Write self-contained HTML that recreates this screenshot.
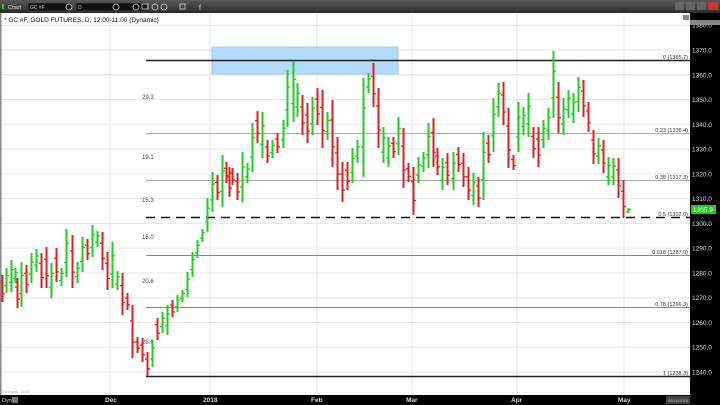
<!DOCTYPE html>
<html><head><meta charset="utf-8"><style>
html,body{margin:0;padding:0;width:720px;height:405px;overflow:hidden;background:#fff;font-family:"Liberation Sans",sans-serif}
svg{display:block}
</style></head><body>
<svg id="s" width="720" height="405" xmlns="http://www.w3.org/2000/svg" font-family="Liberation Sans, sans-serif">
<defs><linearGradient id="tb" x1="0" y1="0" x2="0" y2="1"><stop offset="0" stop-color="#5a5a5a"/><stop offset="1" stop-color="#2a2a2a"/></linearGradient></defs>
<rect x="0" y="0" width="720" height="405" fill="#fff"/>
<g id="grid" stroke="#e6e6e6" stroke-width="1"></g>
<rect x="212" y="47" width="186" height="27" fill="#b3dcfa" stroke="#9ccbee"/>
<g stroke-width="1">
<line x1="146" y1="60.5" x2="690" y2="60.5" stroke="#222" stroke-width="1.5"/>
<line x1="146" y1="133.5" x2="690" y2="133.5" stroke="#aaa"/>
<line x1="146" y1="180.5" x2="690" y2="180.5" stroke="#aaa"/>
<line x1="146" y1="217.5" x2="690" y2="217.5" stroke="#111" stroke-width="1.5" stroke-dasharray="9,6"/>
<line x1="146" y1="255.5" x2="690" y2="255.5" stroke="#888"/>
<line x1="146" y1="307.5" x2="690" y2="307.5" stroke="#888"/>
<line x1="146" y1="376.5" x2="690" y2="376.5" stroke="#222" stroke-width="1.5"/>
</g>
<g font-size="5.5" fill="#333" text-anchor="end">
<text x="688" y="59">0 (1365.7)</text>
<text x="688" y="132">0.23 (1336.4)</text>
<text x="688" y="179">0.38 (1317.3)</text>
<text x="688" y="216">0.5 (1302.0)</text>
<text x="688" y="254">0.618 (1287.0)</text>
<text x="688" y="306">0.78 (1266.3)</text>
<text x="688" y="375">1 (1238.3)</text>
</g>
<g font-size="6" fill="#444">
<text x="142" y="99">29.3</text><text x="142" y="159">19.1</text><text x="142" y="202">15.3</text>
<text x="142" y="239">15.0</text><text x="142" y="283">20.6</text><text x="142" y="344">28.0</text>
</g>
<g id="bars" stroke-width="2"></g>
<rect x="0" y="0" width="720" height="13" fill="url(#tb)"/>
<rect x="2" y="4" width="2" height="5" fill="#3c3"/>
<text x="8" y="9" font-size="5.5" fill="#ddd">Chart</text>
<rect x="28" y="3" width="44" height="8" fill="#111" stroke="#555" stroke-width="0.5"/>
<text x="30" y="9" font-size="5" fill="#ccc">GC #F</text>
<rect x="76" y="3" width="71" height="8" fill="#111" stroke="#555" stroke-width="0.5"/>
<text x="78" y="9" font-size="5" fill="#ccc">D</text>
<g fill="none" stroke="#ddd" stroke-width="0.8">
<circle cx="69" cy="7" r="3"/><circle cx="116" cy="7" r="3"/><circle cx="136" cy="7" r="3"/><circle cx="155" cy="7" r="3"/><circle cx="164" cy="7" r="3"/><rect x="142" y="4" width="6" height="5"/><rect x="180" y="4" width="5" height="5"/>
</g>
<text x="199" y="10" font-size="7" fill="#ddd">f</text>
<rect x="675" y="2" width="9" height="8" fill="#666"/><rect x="686" y="2" width="9" height="8" fill="#666"/><rect x="697" y="2" width="9" height="8" fill="#666"/><rect x="708" y="2" width="10" height="8" fill="#c33"/>
<text x="4" y="22" font-size="6.5" fill="#111">* GC #F, GOLD FUTURES, D, 12:00-11:00 (Dynamic)</text>
<rect x="0" y="13" width="1.5" height="382" fill="#888"/>
<rect x="683" y="15" width="6" height="5" fill="#888"/>
<rect x="690" y="13" width="30" height="392" fill="#000"/>
<g id="ax" font-size="6.5" fill="#ddd"></g>
<rect x="690" y="20" width="30" height="5" fill="#888"/>
<rect x="691" y="205" width="25" height="9" fill="#2c2"/>
<text x="693" y="212" font-size="6.5" fill="#fff">1305.9</text>
<rect x="0" y="395" width="720" height="10" fill="#000"/>
<text x="2" y="402" font-size="5.5" fill="#ddd">Dyn</text>
<rect x="12" y="397" width="6" height="6" fill="#777"/>
<text x="2" y="393" font-size="4" fill="#aaa">©eSignal, 2018</text>
<g font-size="6.5" fill="#ddd" font-weight="bold">
<text x="105" y="402">Dec</text><text x="203" y="402">2018</text><text x="311" y="402">Feb</text><text x="406" y="402">Mar</text><text x="511" y="402">Apr</text><text x="618" y="402">May</text>
</g>
<rect x="666" y="396" width="24" height="8" fill="#444"/>
<text x="668" y="402" font-size="4" fill="#bbb">05/16/2018</text>
</svg>
<script>
var NS="http://www.w3.org/2000/svg";
function el(p,t,a){var e=document.createElementNS(NS,t);for(var k in a)e.setAttribute(k,a[k]);p.appendChild(e);return e;}
var g=document.getElementById('grid');
for(var p=1230;p<=1380;p+=10){var y=50+(1370-p)*2.477;el(g,'line',{x1:0,y1:y,x2:690,y2:y});}
[110,210,317,412,517,624].forEach(function(x){el(g,'line',{x1:x,y1:14,x2:x,y2:395});});
var ax=document.getElementById('ax');
for(var p=1240;p<=1380;p+=10){var y=50+(1370-p)*2.477;var t=el(ax,'text',{x:692,y:y+2.5});t.textContent=p+".0";}
var d=[[2,275,302,'r'],[6,268,293,'g'],[11,260,292,'g'],[15,268,283,'g'],[17,278,308,'r'],[21,262,307,'g'],[26,265,293,'r'],[31,253,283,'g'],[36,249,272,'g'],[41,253,288,'r'],[46,247,288,'r'],[51,263,298,'g'],[56,248,282,'r'],[61,268,286,'g'],[66,229,277,'g'],[72,235,288,'r'],[77,262,283,'g'],[82,237,272,'g'],[87,239,260,'r'],[92,225,257,'g'],[97,231,247,'g'],[102,232,270,'r'],[107,252,290,'r'],[112,242,288,'g'],[117,271,290,'g'],[122,273,315,'r'],[127,293,310,'r'],[132,305,358,'r'],[137,337,353,'r'],[142,338,362,'r'],[147,352,376,'r'],[152,340,367,'g'],[157,318,340,'r'],[162,312,333,'g'],[167,305,335,'g'],[172,300,317,'r'],[177,295,312,'g'],[182,290,302,'g'],[187,272,297,'g'],[192,252,277,'g'],[197,240,258,'g'],[202,229,242,'g'],[207,198,232,'g'],[212,172,212,'g'],[217,175,200,'r'],[222,155,207,'g'],[226,162,183,'r'],[229,167,197,'r'],[232,168,185,'r'],[237,173,200,'r'],[242,152,202,'g'],[247,163,183,'g'],[252,123,172,'g'],[257,111,143,'r'],[262,112,158,'g'],[267,140,163,'r'],[272,140,158,'g'],[277,133,153,'r'],[283,120,148,'g'],[287,70,127,'g'],[293,61,122,'g'],[297,83,117,'g'],[302,95,135,'r'],[307,103,143,'r'],[312,97,135,'g'],[317,88,125,'r'],[322,90,148,'r'],[327,112,140,'g'],[332,100,167,'r'],[337,137,190,'r'],[342,162,202,'r'],[347,162,190,'r'],[352,148,183,'g'],[357,140,163,'g'],[363,78,177,'g'],[368,73,93,'g'],[373,63,107,'r'],[378,88,148,'r'],[383,127,163,'g'],[388,137,167,'g'],[393,137,158,'r'],[398,117,155,'g'],[403,128,188,'r'],[408,163,182,'r'],[413,167,215,'r'],[418,157,183,'g'],[423,152,172,'g'],[428,123,168,'g'],[433,118,167,'r'],[437,148,175,'r'],[442,158,190,'g'],[447,153,185,'r'],[453,152,190,'g'],[458,147,172,'r'],[463,153,187,'r'],[468,167,200,'r'],[473,173,205,'g'],[478,177,207,'r'],[483,132,200,'g'],[488,135,163,'r'],[493,98,152,'g'],[498,83,117,'g'],[503,82,125,'r'],[508,108,168,'r'],[513,155,170,'r'],[518,102,152,'g'],[523,107,135,'g'],[528,93,137,'g'],[533,127,158,'r'],[538,127,167,'r'],[543,120,148,'g'],[548,108,140,'g'],[553,51,118,'g'],[558,82,133,'r'],[563,98,135,'g'],[568,90,118,'g'],[573,93,123,'g'],[578,77,112,'g'],[583,80,117,'r'],[588,102,132,'r'],[593,130,164,'r'],[598,138,164,'g'],[603,140,173,'r'],[608,157,185,'g'],[613,158,185,'g'],[618,158,198,'r'],[623,180,218,'r'],[628,208,213,'g']];
var b=document.getElementById('bars');
d.forEach(function(r){var c=r[3]=='g'?'#22cc22':'#e02020';var x=r[0]+0.5,h=r[1],l=r[2];
var o,cl;if(r[3]=='g'){o=l-(l-h)*0.3;cl=h+(l-h)*0.3;}else{o=h+(l-h)*0.3;cl=l-(l-h)*0.3;}
el(b,'line',{x1:x,y1:h,x2:x,y2:l,stroke:c});
el(b,'line',{x1:x-2.5,y1:o,x2:x,y2:o,stroke:c,'stroke-width':1.3});
el(b,'line',{x1:x,y1:cl,x2:x+2.5,y2:cl,stroke:c,'stroke-width':1.3});});
</script>
</body></html>
